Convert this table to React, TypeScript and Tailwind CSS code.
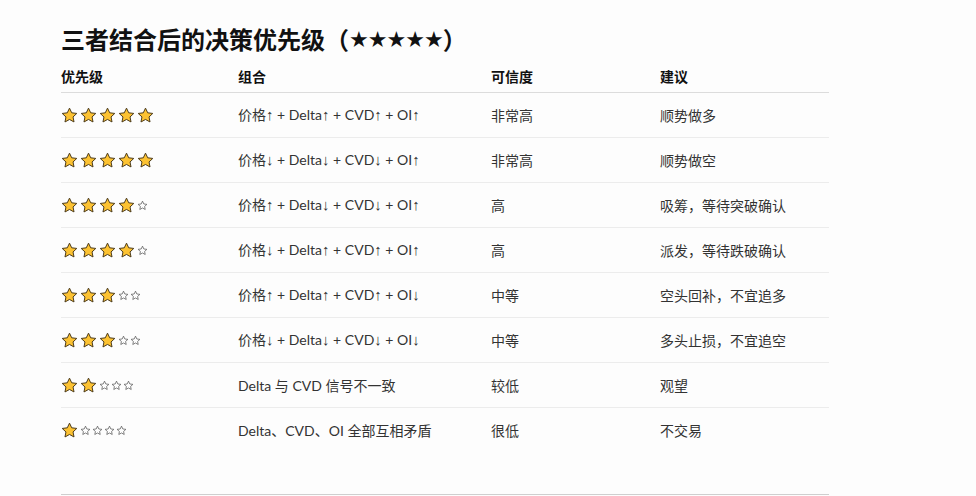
import React from "react";

const Filled = () => (
  <svg width="17" height="17" viewBox="0 0 24 24" className="mr-[2px] shrink-0">
    <path
      d="M12 1.6l3.1 6.6 7.2.88-5.3 4.95 1.38 7.1L12 17.6l-6.38 3.55 1.38-7.1-5.3-4.95 7.2-.88z"
      fill="#FCC232"
      stroke="#4a3a1a"
      strokeWidth="1.4"
      strokeLinejoin="round"
    />
  </svg>
);

const Hollow = () => (
  <svg width="11" height="11" viewBox="0 0 24 24" className="mr-[1px] shrink-0">
    <path
      d="M12 2.5l2.9 6.2 6.7.8-5 4.6 1.3 6.6L12 17.4l-5.9 3.3 1.3-6.6-5-4.6 6.7-.8z"
      fill="none"
      stroke="#555"
      strokeWidth="1.6"
      strokeLinejoin="round"
    />
  </svg>
);

const Stars = ({ n }: { n: number }) => (
  <div className="flex items-center">
    {Array.from({ length: 5 }).map((_, i) =>
      i < n ? <Filled key={i} /> : <Hollow key={i} />
    )}
  </div>
);

const Txt = ({ s }: { s: string }) => (
  <div>
    {s.split(/([↑↓])/).map((p, i) =>
      p === "↑" || p === "↓" ? (
        <span key={i} className="text-[15px]" style={{ fontFamily: '"Liberation Sans", sans-serif' }}>
          {p}
        </span>
      ) : (
        <span key={i}>{p}</span>
      )
    )}
  </div>
);

const rows: [number, string, string, string][] = [
  [5, "价格↑ + Delta↑ + CVD↑ + OI↑", "非常高", "顺势做多"],
  [5, "价格↓ + Delta↓ + CVD↓ + OI↑", "非常高", "顺势做空"],
  [4, "价格↑ + Delta↓ + CVD↓ + OI↑", "高", "吸筹，等待突破确认"],
  [4, "价格↓ + Delta↑ + CVD↑ + OI↑", "高", "派发，等待跌破确认"],
  [3, "价格↑ + Delta↑ + CVD↑ + OI↓", "中等", "空头回补，不宜追多"],
  [3, "价格↓ + Delta↓ + CVD↓ + OI↓", "中等", "多头止损，不宜追空"],
  [2, "Delta 与 CVD 信号不一致", "较低", "观望"],
  [1, "Delta、CVD、OI 全部互相矛盾", "很低", "不交易"],
];

export default function App() {
  return (
    <div
      className="w-[976px] h-[496px] overflow-hidden bg-[#fdfdfd] text-[#333] pl-[61px] pt-[24px]"
      style={{ fontFamily: 'Lato, "Noto Sans CJK SC", sans-serif' }}
    >
      <h1 className="h-[32px] flex items-center text-[24px] leading-[32px] font-bold text-[#111]">
        三者结合后的决策优先级（
        <span className="text-[22px] leading-none tracking-[-1px]" style={{ fontFamily: '"DejaVu Sans", sans-serif' }}>
          ★★★★★
        </span>
        ）
      </h1>
      <div className="w-[768px] mt-[5px]">
        <div className="grid grid-cols-[177px_253px_169px_169px] h-[32px] items-center border-b border-[#dcdcdc] text-[14px] font-bold text-[#111]">
          <div>优先级</div>
          <div>组合</div>
          <div>可信度</div>
          <div>建议</div>
        </div>
        {rows.map(([n, combo, cred, adv], i) => (
          <div
            key={i}
            className={
              "grid grid-cols-[177px_253px_169px_169px] h-[45px] items-center text-[14px] " +
              (i < rows.length - 1 ? "border-b border-[#ececec]" : "")
            }
          >
            <Stars n={n} />
            <Txt s={combo} />
            <div>{cred}</div>
            <div>{adv}</div>
          </div>
        ))}
        <div className="mt-[41px] border-t border-[#cfcfcf]" />
      </div>
    </div>
  );
}
